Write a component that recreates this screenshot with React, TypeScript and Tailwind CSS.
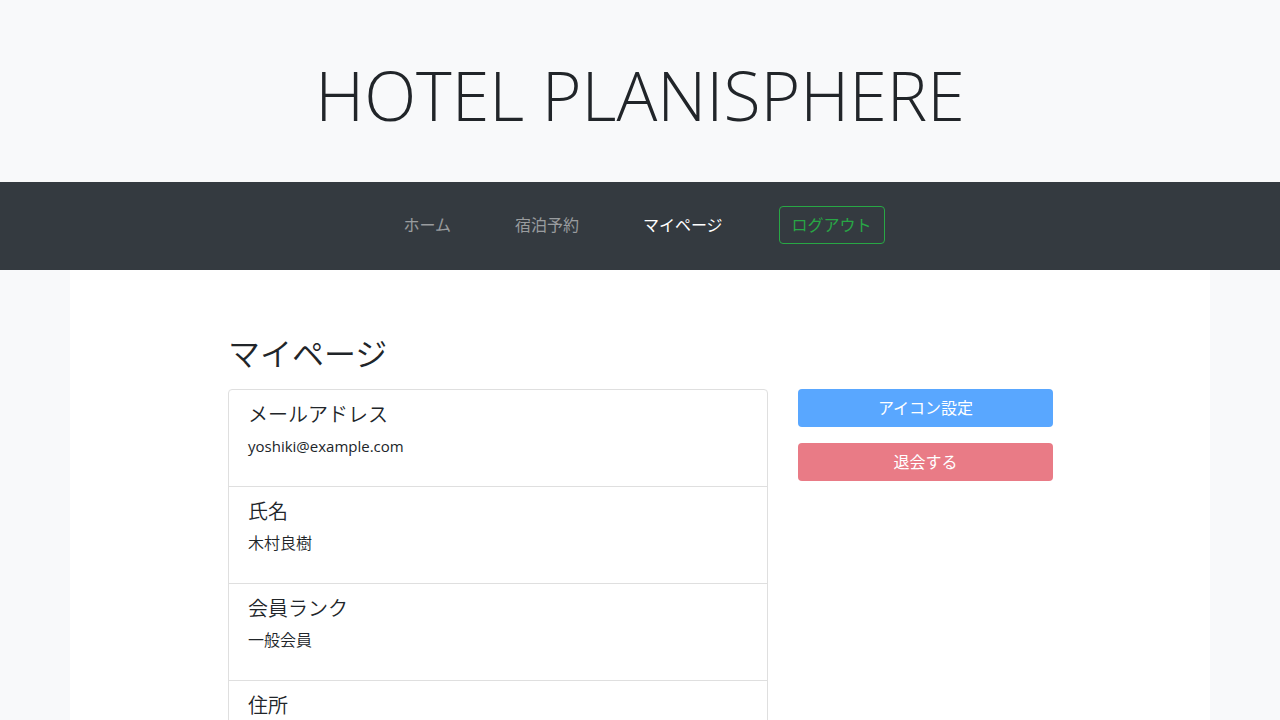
const links = [
  { label: "ホーム", active: false },
  { label: "宿泊予約", active: false },
  { label: "マイページ", active: true },
];

const profile = [
  { label: "メールアドレス", value: "yoshiki@example.com", latin: true },
  { label: "氏名", value: "木村良樹", latin: false },
  { label: "会員ランク", value: "一般会員", latin: false },
  { label: "住所", value: "", latin: false },
];

export default function App() {
  return (
    <div className="h-screen overflow-hidden bg-[#f8f9fa] font-['Open_Sans','Noto_Sans_CJK_JP',sans-serif] text-base text-[#212529]">
      <header className="px-4 pt-13 pb-11 text-center">
        <h1 className="text-[68px] leading-[86px] font-light">HOTEL PLANISPHERE</h1>
      </header>
      <nav className="flex justify-center bg-[#343a40] pt-6 pr-6 pb-[26px]">
        <ul className="flex items-center">
          {links.map((link) => (
            <li key={link.label} className="px-8">
              <a href="#" className={link.active ? "text-white" : "text-white/50"}>{link.label}</a>
            </li>
          ))}
          <li className="pl-6">
            <button type="button" className="rounded border border-[#28a745] px-3 py-1.5 leading-6 text-[#28a745]">ログアウト</button>
          </li>
        </ul>
      </nav>
      <main className="mx-auto min-h-full max-w-[1140px] bg-white pt-16 pr-[157px] pl-[158px]">
        <h2 className="mb-4 text-[32px] leading-[39px] font-[350]">マイページ</h2>
        <div className="flex items-start gap-[30px]">
          <ul className="flex-1 divide-y divide-[#dfdfdf] rounded border border-[#dfdfdf]">
            {profile.map((item) => (
              <li key={item.label} className="px-[19px] pt-[13px] pb-7">
                <h3 className="mb-[7px] text-xl leading-6 font-[350]">{item.label}</h3>
                <p className={item.latin ? "text-[15px] leading-6" : "leading-6 font-[350]"}>{item.value}</p>
              </li>
            ))}
          </ul>
          <div className="flex w-[255px] flex-col gap-4">
            <button type="button" className="rounded bg-[#59a7ff] py-[7px] leading-6 text-white">アイコン設定</button>
            <button type="button" className="rounded bg-[#e97b86] py-[7px] leading-6 text-white">退会する</button>
          </div>
        </div>
      </main>
    </div>
  );
}
